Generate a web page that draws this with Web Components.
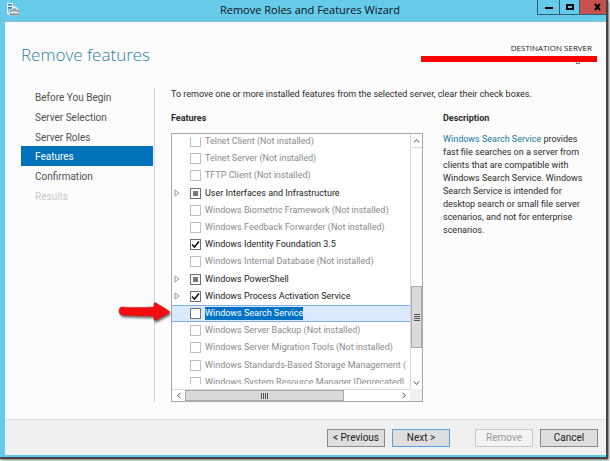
<!DOCTYPE html>
<html lang="en">
<head>
<meta charset="utf-8">
<title>Remove Roles and Features Wizard</title>
<style>
html,body{height:100%;margin:0}
body{background:#fff;color:#2b2b2b;font:9px/13px Roboto,"Open Sans",sans-serif}
</style>
</head>
<body>
<wizard-window></wizard-window>
<script>
const define=(name,html,setup)=>customElements.define(name,class extends HTMLElement{
  connectedCallback(){
    if(this.shadowRoot)return;
    const root=this.attachShadow({mode:'open'});
    const t=document.createElement('template');
    t.innerHTML=html;
    root.append(t.content.cloneNode(true));
    if(setup)setup(this,root);
  }
});

define('title-bar',`<style>
:host{display:grid;grid-template-columns:83px 1fr 69px;height:22px;box-sizing:border-box;background:#66caea;border-bottom:1px solid #8fbfd0;color:#111}
svg{display:block}
.logo{padding:2px 0 0 6px}
h1{margin:0;text-align:center;font:11px/19px "Open Sans",sans-serif}
.controls{display:grid;grid-template-columns:22px 20px 1fr;height:15px;box-sizing:border-box;border:1px solid #315f70;border-top:0;border-right:0}
button{display:grid;place-items:center;border:0;border-right:1px solid #315f70;margin:0;padding:0;background:none;color:#000}
.close{background:#c75050;border:0;padding-left:8px}
</style>
<div class="logo"><svg width="14" height="14" viewBox="0 0 14 14"><path d="M1 1h6v11H1z" fill="#fff"/><path d="M2 2h4v2H2zM2 5h4v6H2z" fill="#1684cf"/><path d="M2 4h5M2 7h2M2 9h1" stroke="#c5e4f5"/><path d="M3 13V9l3-2 1-2h3l1 2 2 2v4z" fill="#e9edf0" stroke="#fff"/><path d="M4 9l3-1V7h3v1l3 1v4H4z" fill="#a9b4bd" stroke="#64747f" stroke-width=".7"/><path d="M4 10.500h9" stroke="#eef2f5"/></svg></div>
<h1><slot></slot></h1>
<div class="controls">
<button aria-label="Minimize"><svg width="8" height="8"><path d="M0 4h8v2H0z"/></svg></button>
<button aria-label="Maximize"><svg width="8" height="8"><path d="M1 2h6v4H1z" fill="none" stroke="#000" stroke-width="2"/></svg></button>
<button class="close" aria-label="Close"><svg width="7" height="8"><path d="M1 1l5 6M6 1L1 7" stroke="#000" stroke-width="2"/></svg></button>
</div>`);

define('page-header',`<style>
:host{display:flex;justify-content:space-between;align-items:flex-start;padding:17px 14px 0 16px;height:65px;box-sizing:border-box;position:relative}
h2{margin:0;font:300 17px/32px "Open Sans",sans-serif;color:#2a83a5}
.server{text-align:right;font:8px/12px "Open Sans",sans-serif;padding-top:3px;color:#222}
.name{padding-right:12px;line-height:10px}
.mark{position:absolute;right:9px;top:34px;width:176px;height:6px;background:#f00}
</style>
<h2><slot></slot></h2>
<div class="server"><div>DESTINATION SERVER</div><div class="name">g</div></div>
<div class="mark"></div>`);

define('step-nav',`<style>
:host{display:block;border-right:1px solid #d4d4d4}
nav{display:grid;grid-auto-rows:1fr;height:118px}
a{display:flex;align-items:center;padding:2px 0 0 14px;margin-right:1px;color:#505050;text-decoration:none;font:10px/13px Roboto,sans-serif}
a[aria-current]{background:#0072bc;color:#fff}
a[aria-disabled]{color:#c9c9c9}
</style>
<nav><a href="#before">Before You Begin</a><a href="#selection">Server Selection</a><a href="#roles">Server Roles</a><a href="#features" aria-current="step">Features</a><a href="#confirmation">Confirmation</a><a aria-disabled="true">Results</a></nav>`);

define('feature-item',`<style>
:host{display:grid;grid-template-columns:18px 15px max-content;align-items:center;color:#222;border:1px solid transparent;border-width:1px 0}
:host([off]){color:#8a8a8a}
:host([selected]){background:#dbe9fc;border-color:#7fb0e6}
label{line-height:13px}
:host([selected]) label{background:#0072c6;color:#fff}
svg{visibility:hidden;margin-left:2px}
:host([expandable]) svg{visibility:visible}
input{appearance:none;width:11px;height:11px;margin:0;border:1px solid #707070;background:#fff center/9px 9px no-repeat}
:host([off]) input{border-color:#c0c0c0}
input:checked{background-image:url("data:image/svg+xml,%3Csvg xmlns='http://www.w3.org/2000/svg' viewBox='0 0 9 9'%3E%3Cpath d='M1 4.500l2.500 2.500L8 1.500' fill='none' stroke='%23111' stroke-width='1.600'/%3E%3C/svg%3E")}
input:indeterminate{background-image:linear-gradient(#777,#777);background-size:5px 5px}
</style>
<svg width="6" height="8"><path d="M1 1L5 4 1 7z" fill="#fff" stroke="#999"/></svg>
<input type="checkbox" id="c"><label for="c"><slot></slot></label>`,(host,root)=>{
  const c=root.querySelector('input');
  c.checked=host.getAttribute('state')==='on';
  c.indeterminate=host.getAttribute('state')==='mixed';
  c.disabled=host.hasAttribute('off');
});

define('feature-list',`<style>
:host{display:grid;grid-template:1fr 12px / 1fr 12px;border:1px solid #a9a9a9;height:269px;box-sizing:border-box;background:#fff;position:relative}
.view{overflow:hidden;margin:3px 0 5px;min-width:0}
.rows{display:grid;grid-auto-rows:1fr;height:258px;margin-top:-4px}
.v,.h{display:grid;background:#fff}
.v{grid-template-rows:14px 138px 1fr 13px;border-left:1px solid #d8d8d8}
.h{grid-template-columns:13px 1fr 53px 13px;border-top:1px solid #d8d8d8}
.corner{background:#f0f0f0}
span{display:grid;place-items:center}
.up{border-bottom:1px solid #d8d8d8}
.thumb{background:#dadada;outline:1px solid #aaa;outline-offset:-1px}
.v .thumb{margin-bottom:28px}
.v path,.h path{fill:none;stroke:#555}
.arrow{position:absolute;left:-55px;top:168px}
</style>
<div class="view"><div class="rows"><slot></slot></div></div>
<div class="v"><span class="up"><svg width="7" height="6"><path d="M1 4.500L3.500 1.500 6 4.500"/></svg></span><i></i><span class="thumb"><svg width="6" height="7"><path d="M0 .5h6M0 2.500h6M0 4.500h6M0 6.500h6"/></svg></span><span><svg width="7" height="6"><path d="M1 1.500L3.500 4.500 6 1.500"/></svg></span></div>
<div class="h"><span><svg width="6" height="7"><path d="M4.500 1L1.500 3.500 4.500 6"/></svg></span><span class="thumb"><svg width="7" height="6"><path d="M.5 0v6M2.500 0v6M4.500 0v6M6.500 0v6"/></svg></span><i></i><span><svg width="6" height="7"><path d="M1.500 1L4.500 3.500 1.500 6"/></svg></span></div>
<div class="corner"></div>
<svg class="arrow" width="56" height="24" viewBox="0 0 56 24"><defs><filter id="s" x="-20%" y="-20%" width="140%" height="160%"><feDropShadow dx="1" dy="2" stdDeviation="1" flood-opacity=".6"/></filter></defs><path filter="url(#s)" fill="#f50d0d" stroke="#b01010" stroke-width=".5" d="M4 5Q20 6 37 5V2q0-2 2-1l13 8q1 1 0 2l-13 7q-2 1-2-1v-3Q20 14 5 13Q2 12 2 9Q2 6 4 5z"/></svg>`);

define('wizard-button',`<style>
:host{display:block;width:58px}
button{width:100%;height:18px;box-sizing:border-box;padding:0;border:1px solid #8a8a8a;background:#dedede;color:#222;font:10px/13px Roboto,sans-serif}
:host([primary]) button{border-color:#559fe8}
button:disabled{background:#f3f3f3;border-color:#c8c8c8;color:#999}
</style><button><slot></slot></button>`,(host,root)=>{root.querySelector('button').disabled=host.hasAttribute('disabled')});

define('wizard-window',`<style>
:host{display:flex;flex-direction:column;height:100vh;box-sizing:border-box;padding:0 4px 4px 0;overflow:hidden;background:#fff}
.win{flex:1;display:flex;flex-direction:column;background:#66caea;box-shadow:1px 1px 1px 1px #444,2px 2px 3px 1px #777;min-height:0}
.body{flex:1;display:flex;flex-direction:column;margin:0 0 2px 5px;background:#fcfcfc;min-height:0}
main{flex:1;display:grid;grid-template-columns:134px 252px 1fr;padding:0 14px 17px 16px}
.features{margin:0 0 0 16px;width:252px}
.intro{margin:0;height:23px;padding-top:1px;white-space:nowrap}
h3{margin:0;font-size:9px;font-weight:700;line-height:15px;height:22px}
.desc{margin-left:36px;padding-top:24px;width:148px}
.desc p{margin:0}
a{color:#17789b;text-decoration:none}
footer{display:flex;justify-content:flex-end;align-items:center;gap:7px;height:36px;box-sizing:border-box;padding-right:8px;background:#f0f0f0;border-top:1px solid #ddd}
.gap{margin-left:18px}
</style>
<div class="win">
<title-bar>Remove Roles and Features Wizard</title-bar>
<div class="body">
<page-header>Remove features</page-header>
<main>
<step-nav></step-nav>
<section class="features">
<p class="intro">To remove one or more installed features from the selected server, clear their check boxes.</p>
<h3>Features</h3>
<feature-list>
<feature-item off>Telnet Client (Not installed)</feature-item>
<feature-item off>Telnet Server (Not installed)</feature-item>
<feature-item off>TFTP Client (Not installed)</feature-item>
<feature-item expandable state="mixed">User Interfaces and Infrastructure</feature-item>
<feature-item off>Windows Biometric Framework (Not installed)</feature-item>
<feature-item off>Windows Feedback Forwarder (Not installed)</feature-item>
<feature-item state="on">Windows Identity Foundation 3.5</feature-item>
<feature-item off>Windows Internal Database (Not installed)</feature-item>
<feature-item expandable state="mixed">Windows PowerShell</feature-item>
<feature-item expandable state="on">Windows Process Activation Service</feature-item>
<feature-item selected>Windows Search Service</feature-item>
<feature-item off>Windows Server Backup (Not installed)</feature-item>
<feature-item off>Windows Server Migration Tools (Not installed)</feature-item>
<feature-item off>Windows Standards-Based Storage Management (</feature-item>
<feature-item off>Windows System Resource Manager [Deprecated]</feature-item>
</feature-list>
</section>
<section class="desc">
<h3>Description</h3>
<p><a href="#search">Windows Search Service</a> <span>provides</span> <span>fast file searches on a server from clients that are compatible with Windows Search Service. Windows Search Service is intended for desktop search or small file server scenarios, and not for enterprise scenarios.</span></p>
</section>
</main>
<footer><wizard-button>&lt; Previous</wizard-button><wizard-button primary>Next &gt;</wizard-button><wizard-button class="gap" disabled>Remove</wizard-button><wizard-button>Cancel</wizard-button></footer>
</div>
</div>`);
</script>
</body>
</html>
